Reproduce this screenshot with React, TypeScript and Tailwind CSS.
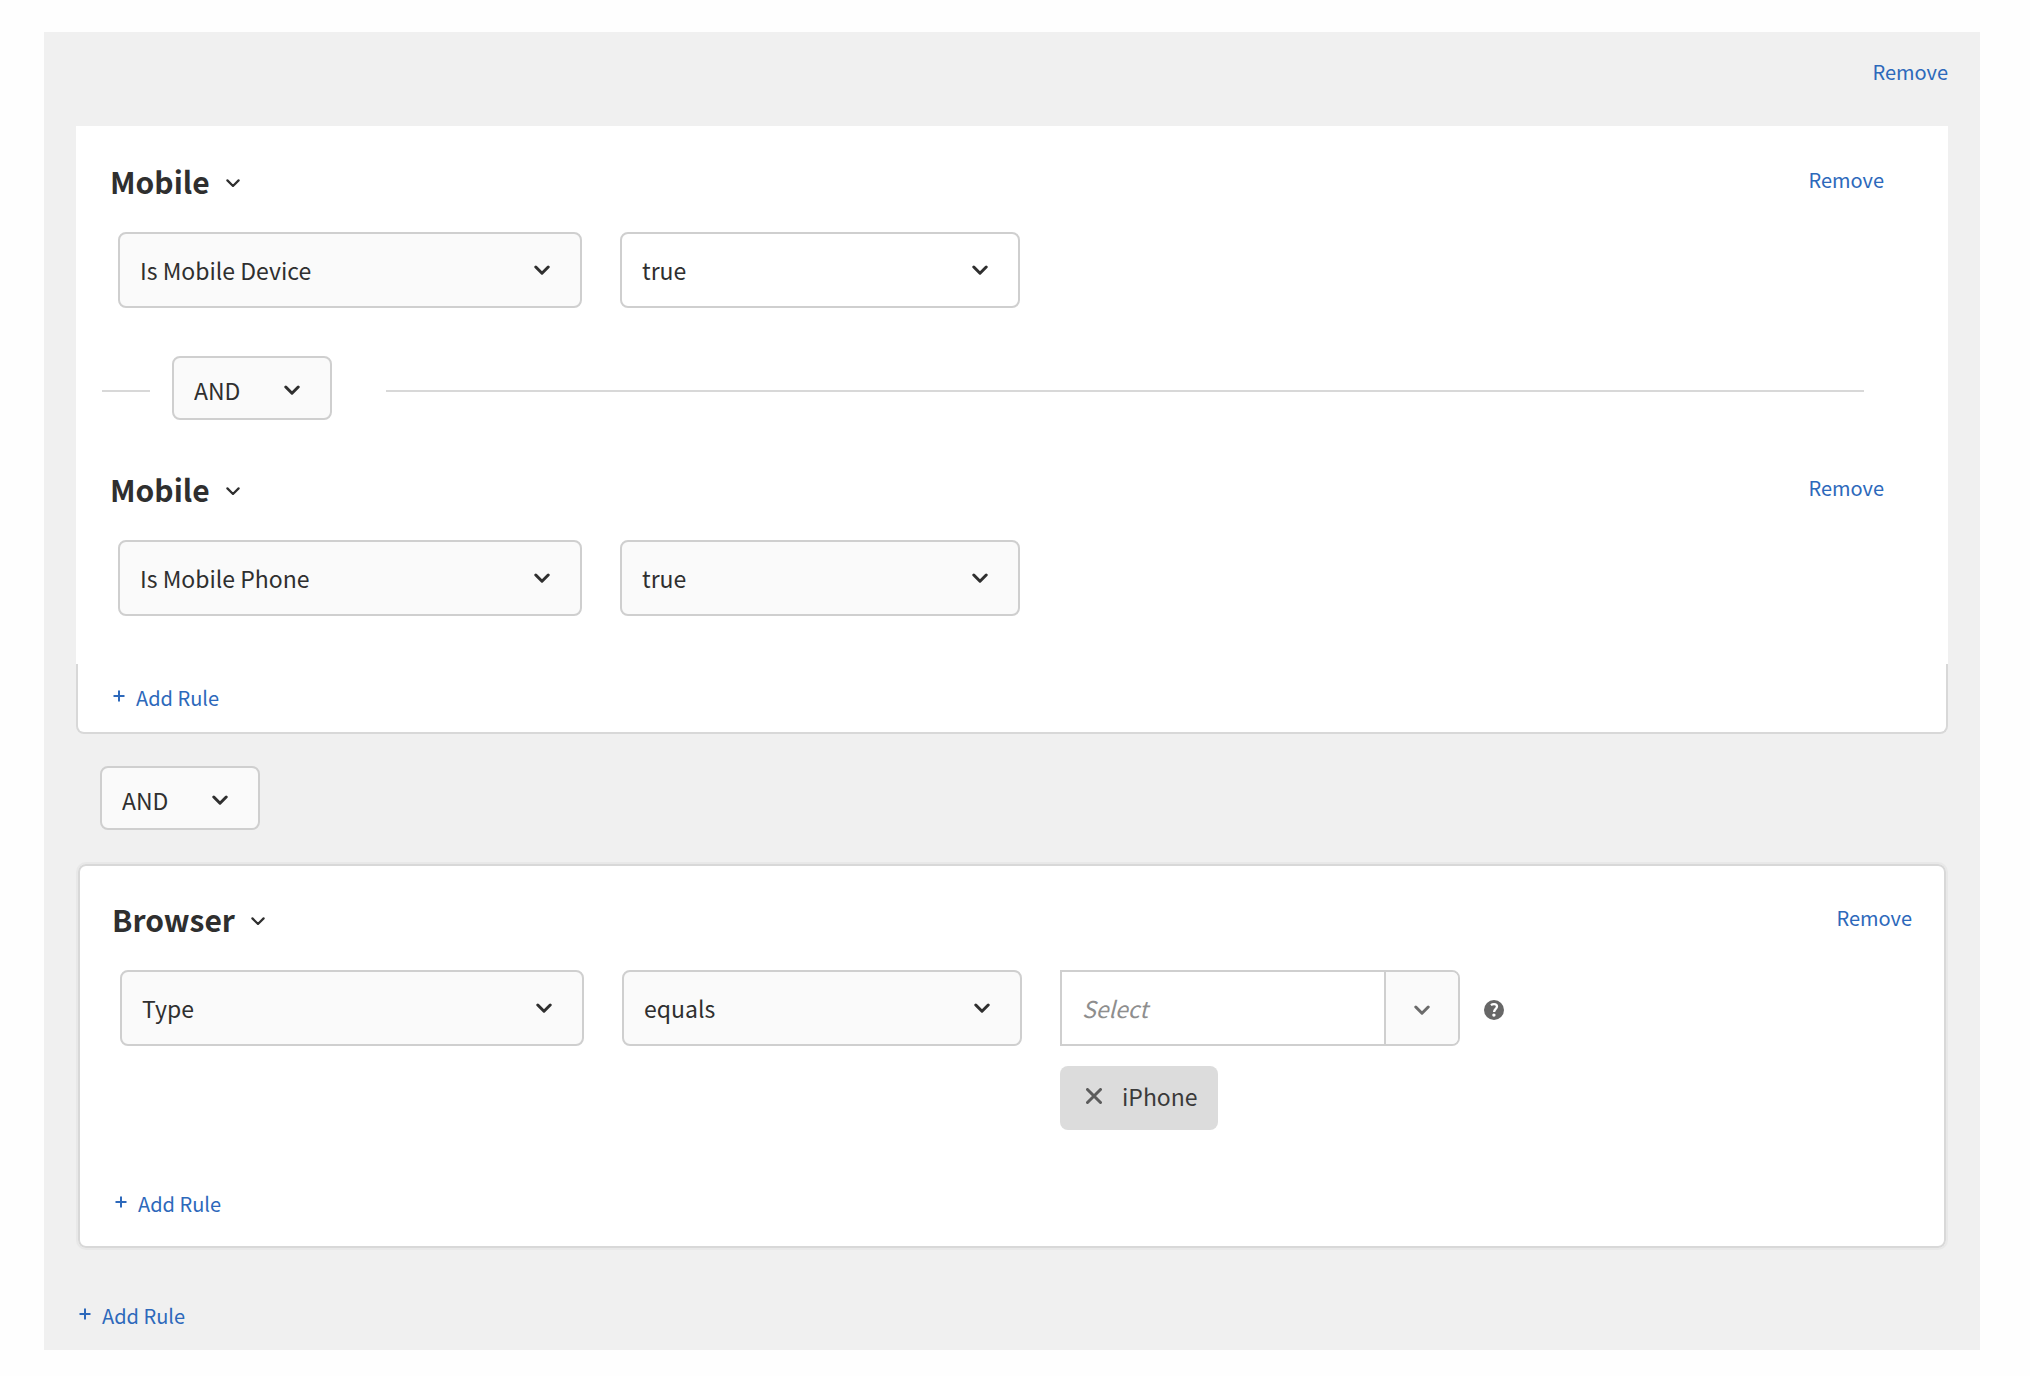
import { useState } from "react";
import type { ReactNode } from "react";

function Chevron({ className = "" }: { className?: string }) {
  return (
    <svg viewBox="0 0 16 10" aria-hidden="true" className={`pointer-events-none h-[10px] w-4 ${className}`}>
      <path d="M1.8 2 8 8.2 14.2 2" fill="none" stroke="currentColor" strokeWidth="3" strokeLinecap="round" strokeLinejoin="round" />
    </svg>
  );
}

function RemoveLink() {
  return (
    <button type="button" className="text-xl leading-9 text-[#2d69bb] hover:underline">
      Remove
    </button>
  );
}

function AddRule() {
  return (
    <button type="button" className="flex items-center gap-[11px] text-xl leading-8 text-[#2d69bb] hover:underline">
      <svg viewBox="0 0 12 12" aria-hidden="true" className="mb-1 size-3">
        <path d="M6 .5v11M.5 6h11" stroke="currentColor" strokeWidth="2" />
      </svg>
      Add Rule
    </button>
  );
}

interface PickerProps {
  label: string;
  options: string[];
  size: "attribute" | "value";
  plain?: boolean;
}

function Picker({ label, options, size, plain }: PickerProps) {
  const [value, setValue] = useState(options[0]);

  return (
    <div className={`grid items-center ${size === "attribute" ? "w-[464px]" : "w-[400px]"}`}>
      <select
        aria-label={label}
        value={value}
        onChange={e => setValue(e.target.value)}
        className={`col-start-1 row-start-1 h-[76px] appearance-none rounded-lg border-2 border-[#cfcfcf] pl-5 pr-16 text-[23px] text-[#2f2f2f] ${
          plain ? "bg-white" : "bg-[#fafafa]"
        }`}
      >
        {options.map(o => <option key={o}>{o}</option>)}
      </select>
      <Chevron className="col-start-1 row-start-1 mr-8 justify-self-end text-[#2f2f2f]" />
    </div>
  );
}

function OperatorPicker() {
  const [value, setValue] = useState("AND");

  return (
    <div className="grid w-40 items-center">
      <select
        aria-label="Operator"
        value={value}
        onChange={e => setValue(e.target.value)}
        className="col-start-1 row-start-1 h-16 appearance-none rounded-lg border-2 border-[#cfcfcf] bg-[#fafafa] pl-5 pt-1 text-[23px] text-[#2f2f2f]"
      >
        <option>AND</option>
        <option>OR</option>
      </select>
      <Chevron className="col-start-1 row-start-1 mr-8 mt-1 justify-self-end text-[#2f2f2f]" />
    </div>
  );
}

interface RuleProps {
  title: string;
  headerClass: string;
  children: ReactNode;
}

function Rule({ title, headerClass, children }: RuleProps) {
  return (
    <section className="pb-12 pl-[34px] pt-9">
      <div className={`flex items-start justify-between ${headerClass}`}>
        <h2 className="text-3xl font-bold leading-[38px] text-[#2f2f2f]">
          <button type="button" className="flex items-center gap-4">
            {title}
            <svg viewBox="0 0 14 8" aria-hidden="true" className="mt-1 h-2 w-[14px]">
              <path d="M1.4 1.4 7 7l5.6-5.6" fill="none" stroke="currentColor" strokeWidth="2.2" strokeLinecap="round" strokeLinejoin="round" />
            </svg>
          </button>
        </h2>
        <RemoveLink />
      </div>
      <div className="ml-2 mt-8 flex items-start gap-[38px]">{children}</div>
    </section>
  );
}

function BrowserValue() {
  const [query, setQuery] = useState("");
  const [tags, setTags] = useState(["iPhone"]);

  return (
    <div className="flex flex-col gap-5">
      <div className="flex items-center gap-6">
        <div className="flex h-[76px] w-[400px] rounded-r-lg border-2 border-[#cfcfcf] bg-white">
          <input
            aria-label="Browser type"
            value={query}
            onChange={e => setQuery(e.target.value)}
            placeholder="Select"
            className="min-w-0 flex-1 px-5 text-[23px] text-[#2f2f2f] placeholder:italic placeholder:text-[#8e8e8e] focus:outline-none"
          />
          <button
            type="button"
            aria-label="Show options"
            className="flex w-[74px] items-center justify-center rounded-r-md border-l-2 border-[#cfcfcf] bg-[#fafafa] pt-1 text-[#6b6b6b]"
          >
            <Chevron />
          </button>
        </div>
        <button type="button" aria-label="Help" className="mt-1">
          <svg viewBox="0 0 20 20" aria-hidden="true" className="size-5">
            <circle cx="10" cy="10" r="10" fill="#676767" />
            <path d="M6.9 5.1C8 4.3 9 4.1 10 4.1c1.9 0 3 1 3 2.5 0 2.3-2.9 2.5-2.9 5.4" fill="none" stroke="#fff" strokeWidth="2.3" />
            <circle cx="9.9" cy="15.1" r="1.7" fill="#fff" />
          </svg>
        </button>
      </div>
      <div className="flex gap-4">
        {tags.map(t => (
          <span key={t} className="flex h-16 items-center gap-5 rounded-lg bg-[#dcdcdc] pb-1 pl-[26px] pr-5 text-[23px] text-[#3a3a3a]">
            <button type="button" aria-label={`Remove ${t}`} onClick={() => setTags(prev => prev.filter(x => x !== t))}>
              <svg viewBox="0 0 16 16" aria-hidden="true" className="size-4 text-[#5c5c5c]">
                <path d="M1.5 1.5l13 13M14.5 1.5l-13 13" stroke="currentColor" strokeWidth="3" strokeLinecap="round" />
              </svg>
            </button>
            {t}
          </span>
        ))}
      </div>
    </div>
  );
}

export default function App() {
  return (
    <main className="min-h-screen bg-[#fefefe] pb-[26px] pl-11 pr-[50px] pt-8 font-['Noto_Sans_CJK_SC','Noto_Sans',sans-serif]">
      <div className="bg-[#f0f0f0] px-8 pb-[18px]">
        <div className="flex justify-end pb-9 pt-[22px]">
          <RemoveLink />
        </div>

        {/* Mobile rules */}
        <div>
          <div className="bg-white">
            <Rule title="Mobile" headerClass="pr-16">
              <Picker label="Attribute" options={["Is Mobile Device", "Is Mobile Phone"]} size="attribute" />
              <Picker label="Value" options={["true", "false"]} size="value" plain />
            </Rule>

            <div className="flex items-center pb-[14px] pl-[26px] pr-[84px]">
              <hr className="mr-[22px] mt-1.5 w-12 border-t-2 border-[#d8d8d8]" />
              <OperatorPicker />
              <hr className="ml-[54px] mt-1.5 flex-1 border-t-2 border-[#d8d8d8]" />
            </div>

            <Rule title="Mobile" headerClass="pr-16">
              <Picker label="Attribute" options={["Is Mobile Phone", "Is Mobile Device"]} size="attribute" />
              <Picker label="Value" options={["true", "false"]} size="value" />
            </Rule>
          </div>
          <div className="rounded-b-lg border-2 border-t-0 border-[#d8d8d8] bg-white pb-[18px] pl-[35px] pt-[18px]">
            <AddRule />
          </div>
        </div>

        <div className="pb-[34px] pl-6 pt-8">
          <OperatorPicker />
        </div>

        {/* Browser rules */}
        <div className="mx-0.5 rounded-lg bg-white shadow-[inset_0_0_0_2px_#d8d8d8,0_0_0_2px_#e8e8e8]">
          <Rule title="Browser" headerClass="pr-[34px]">
            <Picker label="Attribute" options={["Type", "Vendor", "Version"]} size="attribute" />
            <Picker label="Comparison" options={["equals", "does not equal"]} size="value" />
            <BrowserValue />
          </Rule>
          <div className="pb-7 pl-[37px] pt-[10px]">
            <AddRule />
          </div>
        </div>

        <div className="pl-[3px] pt-[52px]">
          <AddRule />
        </div>
      </div>
    </main>
  );
}
